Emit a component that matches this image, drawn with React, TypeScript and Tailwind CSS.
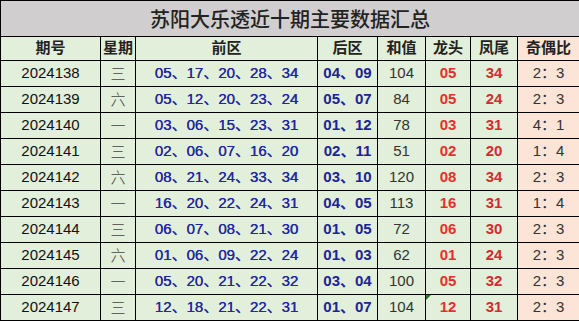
const rows = [
  { id: '2024138', wk: '三', front: '05、17、20、28、34', back: '04、09', sum: '104', head: '05', tail: '34', ratio: '2：3' },
  { id: '2024139', wk: '六', front: '05、12、20、23、24', back: '05、07', sum: '84', head: '05', tail: '24', ratio: '2：3' },
  { id: '2024140', wk: '一', front: '03、06、15、23、31', back: '01、12', sum: '78', head: '03', tail: '31', ratio: '4：1' },
  { id: '2024141', wk: '三', front: '02、06、07、16、20', back: '02、11', sum: '51', head: '02', tail: '20', ratio: '1：4' },
  { id: '2024142', wk: '六', front: '08、21、24、33、34', back: '03、10', sum: '120', head: '08', tail: '34', ratio: '2：3' },
  { id: '2024143', wk: '一', front: '16、20、22、24、31', back: '04、05', sum: '113', head: '16', tail: '31', ratio: '1：4' },
  { id: '2024144', wk: '三', front: '06、07、08、21、30', back: '01、05', sum: '72', head: '06', tail: '30', ratio: '2：3' },
  { id: '2024145', wk: '六', front: '01、06、09、22、24', back: '01、03', sum: '62', head: '01', tail: '24', ratio: '2：3' },
  { id: '2024146', wk: '一', front: '05、20、21、22、32', back: '03、04', sum: '100', head: '05', tail: '32', ratio: '2：3' },
  { id: '2024147', wk: '三', front: '12、18、21、22、31', back: '01、07', sum: '104', head: '12', tail: '31', ratio: '2：3' },
];

const font = { fontFamily: '"Liberation Sans", "Noto Sans CJK SC", sans-serif' };

export default function App() {
  const th = 'border border-black bg-[#e2efda] text-[15px] font-bold text-[#222] text-center p-0';
  const td = 'border border-black bg-[#e2efda] text-center p-0 whitespace-nowrap';

  return (
    <div className="w-[579px] h-[321px] bg-white overflow-hidden" style={font}>
      <table className="table-fixed border-collapse w-[579px]">
        <colgroup>
          <col className="w-[100px]" />
          <col className="w-[35px]" />
          <col className="w-[182px]" />
          <col className="w-[60px]" />
          <col className="w-[48px]" />
          <col className="w-[45px]" />
          <col className="w-[47px]" />
          <col className="w-[62px]" />
        </colgroup>
        <tbody>
          <tr className="h-[36px]">
            <td colSpan={8} className="border border-black bg-[#d0cece] text-center text-[20px] font-medium text-[#222] p-0" style={{ fontFamily: '"Noto Sans CJK SC", sans-serif' }}>
              苏阳大乐透近十期主要数据汇总
            </td>
          </tr>
          <tr className="h-[24px]">
            <td className={th}>期号</td>
            <td className={th}>星期</td>
            <td className={th}>前区</td>
            <td className={th}>后区</td>
            <td className={th}>和值</td>
            <td className={th}>龙头</td>
            <td className={th}>凤尾</td>
            <td className="border border-black bg-[#fce4d6] text-[15px] font-bold text-[#222] text-center p-0">奇偶比</td>
          </tr>
          {rows.map((r, i) => (
            <tr key={r.id} className="h-[26px]">
              <td className={`${td} text-[15px] text-[#111]`}>{r.id}</td>
              <td className={`${td} text-[15px] font-light text-[#444]`} style={{ fontFamily: '"Noto Sans CJK SC", sans-serif' }}>{r.wk}</td>
              <td className={`${td} text-[15px] text-[#1e28a0] [text-shadow:0.3px_0_0_#1e28a0]`}>{r.front}</td>
              <td className={`${td} text-[15px] font-bold text-[#1c2398]`}>{r.back}</td>
              <td className={`${td} text-[15px] text-[#333]`}>{r.sum}</td>
              <td className={`${td} relative text-[15px] font-bold text-[#e33030]`}>
                {i === rows.length - 1 && (
                  <span className="absolute left-0 top-0 w-0 h-0 border-t-[5px] border-r-[5px] border-t-[#1f7a1f] border-r-transparent" />
                )}
                {r.head}
              </td>
              <td className={`${td} text-[15px] font-bold text-[#d42c2c]`}>{r.tail}</td>
              <td className="border border-black bg-[#fce4d6] text-center p-0 text-[15px] text-[#333]">{r.ratio}</td>
            </tr>
          ))}
        </tbody>
      </table>
    </div>
  );
}
